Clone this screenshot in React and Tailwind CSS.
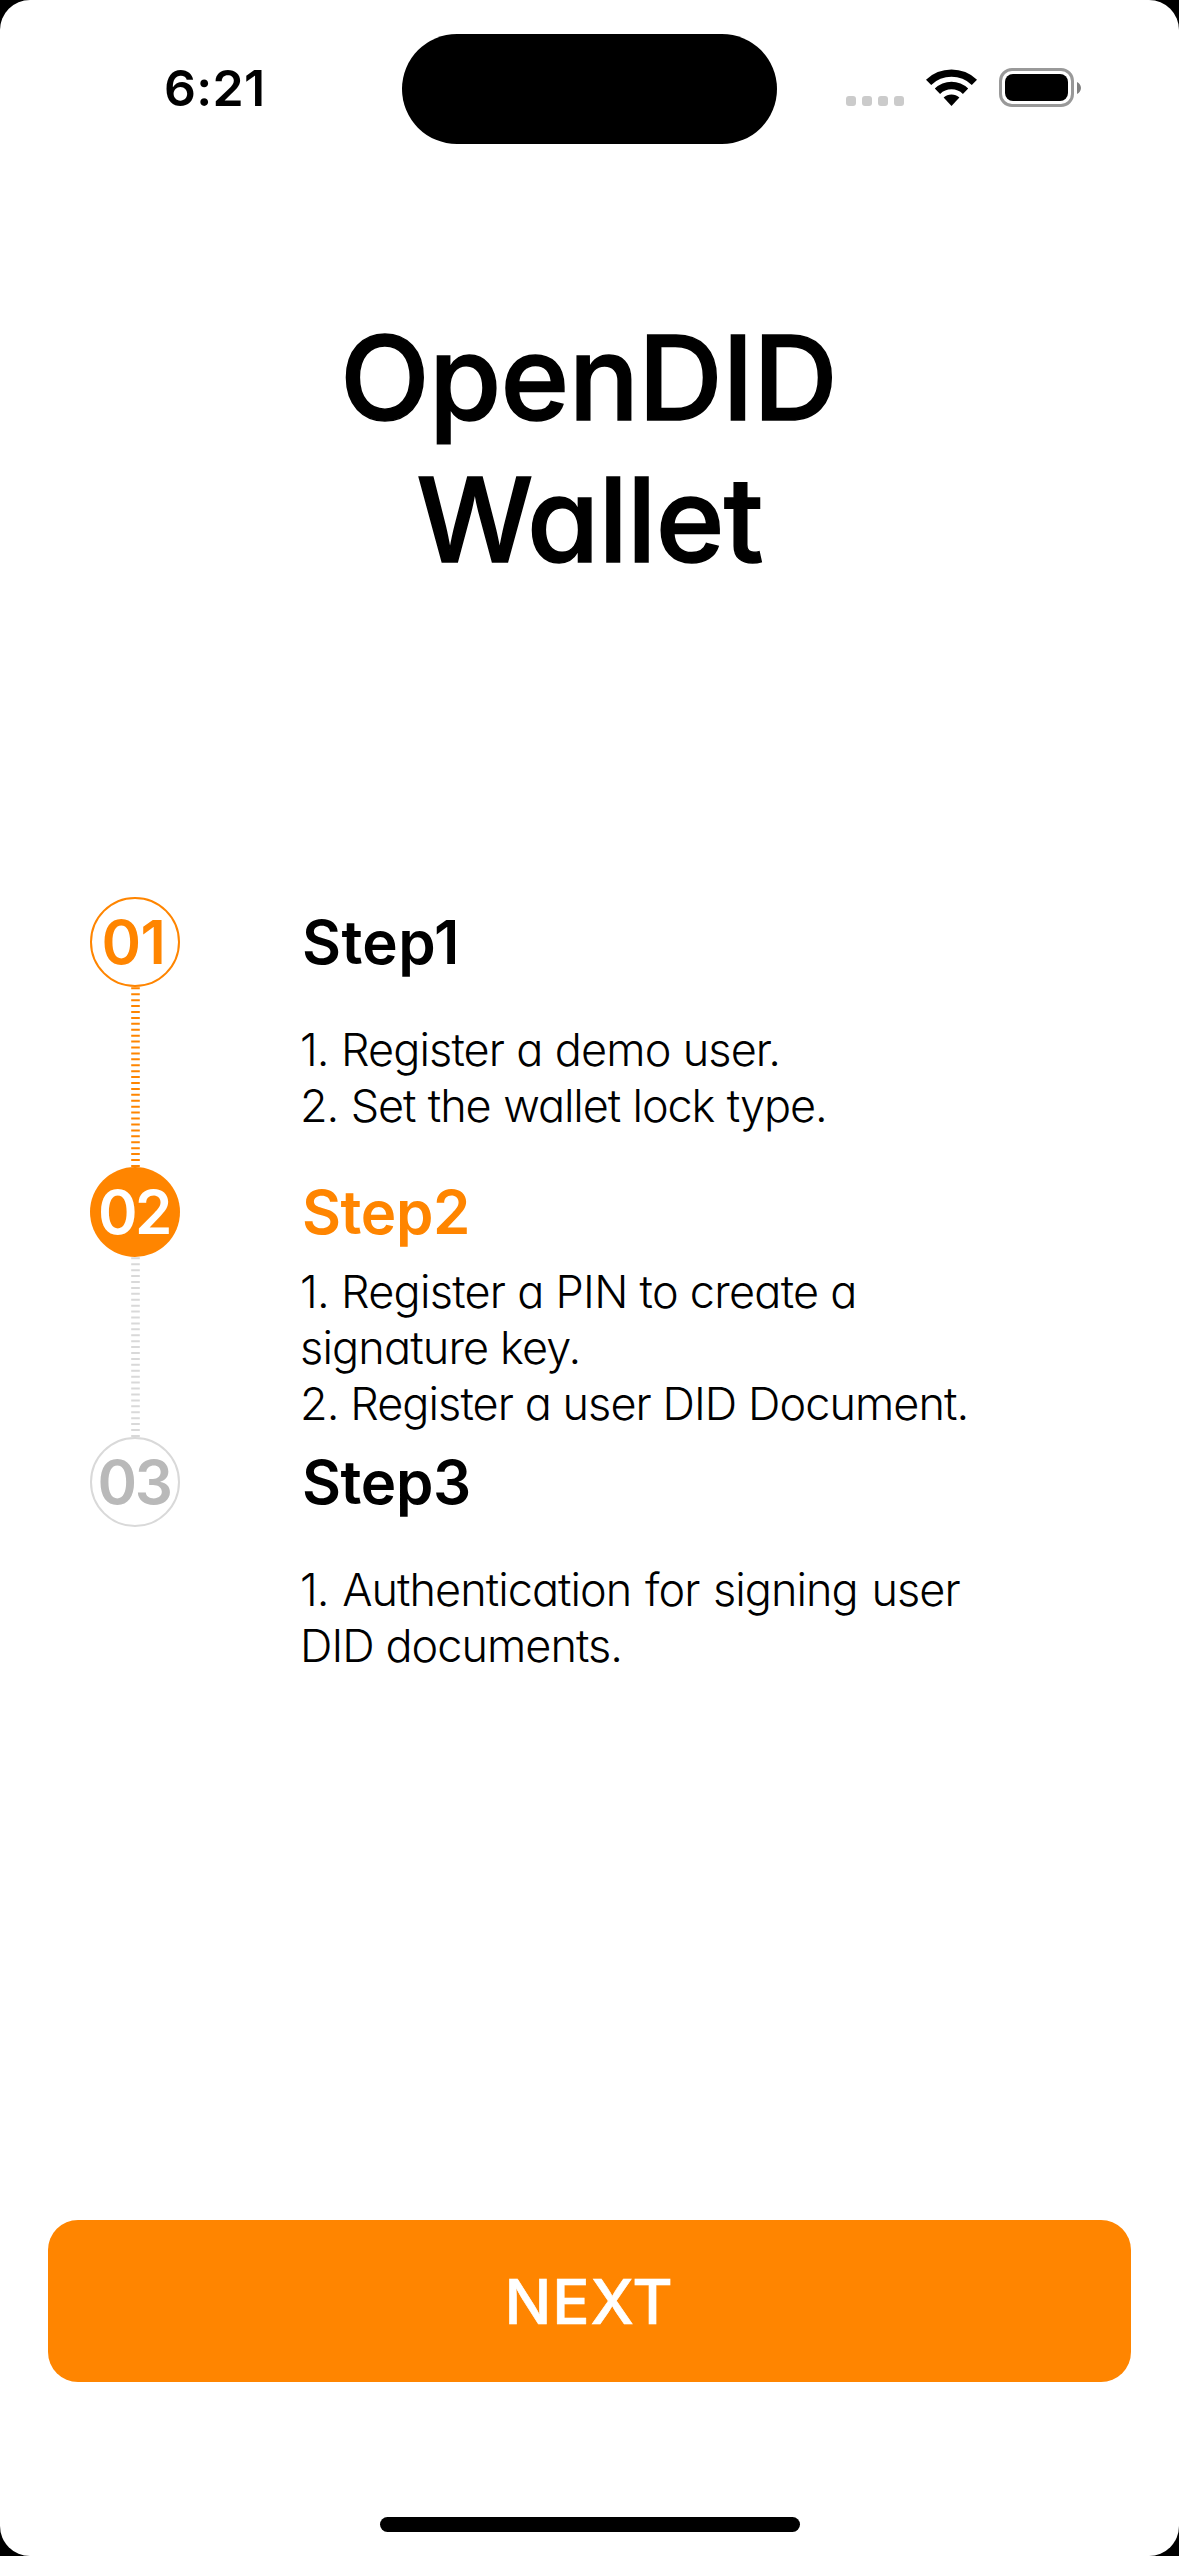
import React from "react";

const steps = [
  {
    number: "01",
    title: "Step1",
    circle: "border-2 border-[#ff8500] text-[#ff8500]",
    numberSpacing: "mr-[3px] tracking-[-0.5px]",
    titleStyle: "text-black tracking-[0.37px]",
    line: "#ff8500",
    body: [
      ["1. Register a demo user.", "tracking-[-0.88px] [word-spacing:0.5px]"],
      ["2. Set the wallet lock type.", "tracking-[-1.1px] [word-spacing:1px]"],
    ],
  },
  {
    number: "02",
    title: "Step2",
    circle: "bg-[#ff8500] text-white",
    numberSpacing: "mr-[2px] tracking-[-2.4px]",
    titleStyle: "text-[#ff8500] tracking-[-0.4px]",
    line: "#d9d9d9",
    body: [
      ["1. Register a PIN to create a", "tracking-[-0.72px]"],
      ["signature key.", "tracking-[-0.85px]"],
      ["2. Register a user DID Document.", "tracking-[-0.93px]"],
    ],
  },
  {
    number: "03",
    title: "Step3",
    circle: "border-2 border-[#d9d9d9] text-[#b9b9b9]",
    numberSpacing: "mr-[2px] tracking-[-2.4px]",
    titleStyle: "text-black tracking-[-0.4px]",
    line: null,
    body: [
      ["1. Authentication for signing user", "tracking-[-0.96px] [word-spacing:2px]"],
      ["DID documents.", "tracking-[-0.95px]"],
    ],
  },
];

function WifiIcon() {
  return (
    <svg width="51" height="37" viewBox="0 0 51 37" className="block">
      <path d="M0 10.8 A36.5 36.5 0 0 1 51 10.8 L45.8 16 A29 29 0 0 0 5.2 16 Z" />
      <path d="M8.8 19.6 A23.8 23.8 0 0 1 42.2 19.6 L36.9 24.9 A16.3 16.3 0 0 0 14.1 24.9 Z" />
      <path d="M17.6 28.6 A11.4 11.4 0 0 1 33.4 28.6 L25.5 37 Z" />
    </svg>
  );
}

function StatusBar() {
  return (
    <header className="flex h-[110px] mt-[34px]">
      <div className="w-[402px] pl-[164px] pt-[29px] text-[50px] leading-[50px] font-semibold tracking-[0.3px]">
        6:21
      </div>
      <div className="w-[375px] h-[110px] rounded-full bg-black" />
      <div className="flex pl-[69px] pt-[34px]">
        <div className="flex gap-[6px] pt-[28px]">
          {[0, 1, 2, 3].map((dot) => (
            <span key={dot} className="size-[10px] rounded-[3px] bg-[#cbcbcb]" />
          ))}
        </div>
        <div className="ml-[22px] pt-px">
          <WifiIcon />
        </div>
        <div className="ml-[22px] w-[75px] h-[39px] rounded-[13px] border-[3px] border-[#999] p-[3px]">
          <div className="h-full rounded-[8px] bg-black" />
        </div>
        <svg width="4" height="12" viewBox="0 0 4 12" className="ml-[3px] mt-[13.5px]" fill="#808080">
          <path d="M0 0 C2.4 1.2 4 3.4 4 6 C4 8.6 2.4 10.8 0 12 Z" />
        </svg>
      </div>
    </header>
  );
}

function Step({ step }) {
  return (
    <li className="flex h-[270px]">
      <div className="flex w-[90px] flex-col items-center">
        <div className={`flex size-[90px] shrink-0 items-center justify-center rounded-full text-[60px] font-semibold leading-none ${step.circle}`}>
          <span className={step.numberSpacing}>{step.number}</span>
        </div>
        {step.line && (
          <svg width="9" height="180" viewBox="0 0 9 180" className="ml-px">
            <line x1="4.5" y1="0.3" x2="4.5" y2="180" stroke={step.line} strokeWidth="8.6" strokeDasharray="2 3.92" />
          </svg>
        )}
      </div>
      <div className="ml-[120px]">
        <h2 className={`pl-[2px] text-[60px] leading-[90px] font-semibold ${step.titleStyle}`}>{step.title}</h2>
        <div className="flex h-[180px] flex-col justify-center whitespace-nowrap pt-[2px] text-[45px] leading-[56px] font-light">
          {step.body.map(([text, spacing]) => (
            <p key={text} className={spacing}>{text}</p>
          ))}
        </div>
      </div>
    </li>
  );
}

export default function App() {
  return (
    <div className="bg-black">
      <div className="flex h-[2556px] w-[1179px] flex-col overflow-hidden rounded-[30px] bg-white font-['Inter',sans-serif] text-black [font-feature-settings:'cv11']">
        <StatusBar />
        <h1 className="mt-[163px] flex flex-col items-center text-[117px] leading-[142px] font-medium [-webkit-text-stroke:1.5px_black]">
          <span className="mr-[2px] tracking-[-0.7px]">OpenDID</span>
          <span className="tracking-[-0.8px]">Wallet</span>
        </h1>
        <ol className="mt-[306px] pl-[90px]">
          {steps.map((step) => (
            <Step key={step.number} step={step} />
          ))}
        </ol>
        <button className="mx-[48px] mt-[513px] h-[162px] rounded-[30px] bg-[#ff8500] pr-[1px] text-[62px] font-medium tracking-[0.8px] text-white [-webkit-text-stroke:0.6px_white]">
          NEXT
        </button>
        <div className="mx-auto mt-[135px] h-[15px] w-[420px] rounded-full bg-black" />
      </div>
    </div>
  );
}
